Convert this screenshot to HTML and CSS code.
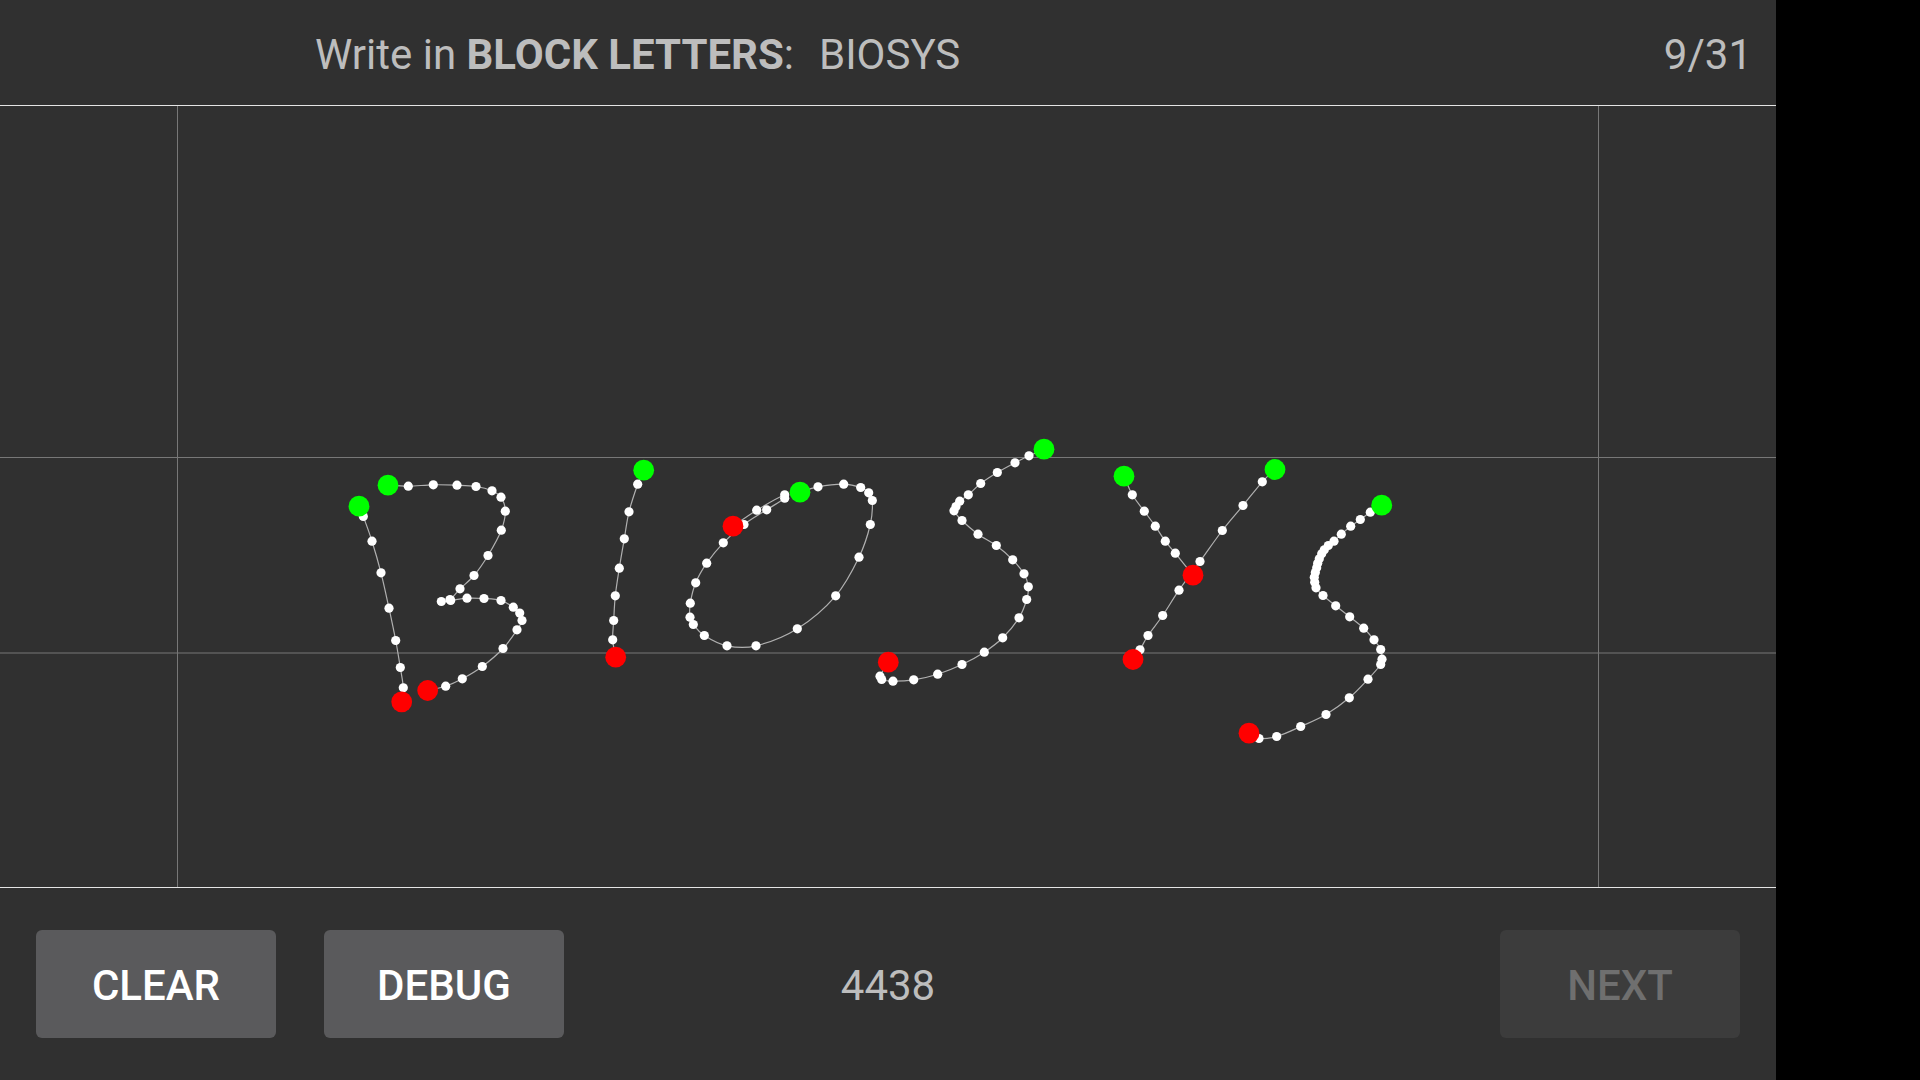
FILE: index.html
```html
<!DOCTYPE html>
<html lang="en">
<head>
<meta charset="utf-8">
<title>Handwriting capture</title>
<link rel="stylesheet" href="styles.css">
</head>
<body>
<main class="app">
  <header class="header">
    <div class="prompt">Write in <b>BLOCK LETTERS</b>:<span class="word">BIOSYS</span></div>
    <div class="count">9/31</div>
  </header>
  <section class="canvas">
    <svg class="ink" viewBox="0 106 1776 781" width="1776" height="781" aria-label="Handwriting trace">
      <line class="guide" x1="177.5" y1="106" x2="177.5" y2="887"></line>
      <line class="guide" x1="1598.5" y1="106" x2="1598.5" y2="887"></line>
      <line class="guide" x1="0" y1="457.5" x2="1776" y2="457.5"></line>
      <line class="guide" x1="0" y1="653" x2="1776" y2="653"></line>
      <g id="ink" transform="translate(0 0.5)"></g>
    </svg>
  </section>
  <footer class="footer">
    <div class="actions">
      <button class="btn">CLEAR</button>
      <button class="btn">DEBUG</button>
    </div>
    <div class="timer">4438</div>
    <div class="end">
      <button class="btn btn-off">NEXT</button>
    </div>
  </footer>
</main>
<script src="app.js"></script>
</body>
</html>
```
FILE: styles.css
```css
* { box-sizing: border-box; }
html, body { margin: 0; height: 100%; background: #000; }
body { font-family: Roboto, "Noto Sans", sans-serif; overflow: hidden; }
.app {
  width: 1776px;
  height: 1080px;
  background: #303030;
  display: flex;
  flex-direction: column;
}
.header {
  height: 106px;
  flex: none;
  border-bottom: 1px solid #e4e4e4;
  display: flex;
  align-items: center;
  justify-content: space-between;
  padding: 4px 24px 0 315px;
  font-size: 42px;
  color: #bdbdbd;
}
.prompt b { font-weight: 700; }
.word { margin-left: 25px; }
.canvas { height: 781px; flex: none; }
.ink { display: block; }
.guide { stroke: #777; stroke-width: 1; }
.trace { fill: none; stroke: #b0b0b0; stroke-width: 1.2; }
.pt { fill: #fff; }
.start { fill: #00ff00; }
.stop { fill: #ff0000; }
.footer {
  flex: 1;
  border-top: 1px solid #e4e4e4;
  display: grid;
  grid-template-columns: 1fr auto 1fr;
  align-items: start;
  padding: 42px 36px 0;
}
.actions { display: flex; gap: 48px; }
.end { display: flex; justify-content: flex-end; }
.btn {
  width: 240px;
  height: 108px;
  border: 0;
  border-radius: 6px;
  background: #5a5a5c;
  color: #fff;
  font: 500 42px Roboto, sans-serif;
  padding: 2px 0 0;
}
.btn-off { background: #3c3c3c; color: #6f6f6f; }
.timer {
  height: 108px;
  padding-top: 2px;
  display: flex;
  align-items: center;
  font-size: 42px;
  color: #bdbdbd;
}
```
FILE: app.js
```js
var strokes = [
  [[359,505.7],[363.3,516],[372,540.7],[381,572.3],[389,607.7],[395.7,640],[400.3,667],[403.3,687.3],[401.7,701.3]],
  [[388,484.7],[408.3,485.7],[433.3,484.3],[457,484.7],[476,486],[492,490.3],[501,496.7],[505.3,510.7],[501.3,529.7],[488,555],[474,575],[460,588.3],[450,599],[441.3,601],[450.7,600],[467,597.7],[484,598],[501,600],[513.3,606.7],[519.7,612.5],[522,620],[517,629.3],[503,648],[482.3,666],[462.3,678.3],[445.7,685.7],[427.7,690]],
  [[643.7,469.7],[637.7,483.7],[629,511.3],[624.3,538.3],[619.3,567.7],[615.3,595.3],[613.7,620],[612.7,639.3],[615.7,656.7]],
  [[800,491.7],[818,486.3],[843.7,483.7],[860.7,487],[868.7,492.3],[872.3,500],[870.3,524],[859,556.7],[835.7,595.3],[797.3,628.3],[756,645.3],[727,645.3],[704.3,635],[693.3,624],[690,616.7],[690.3,602.7],[695.7,582.3],[706.7,562.7],[723.3,542.3],[744,524],[766.7,509.3],[784.7,497.7],[784.7,494.3],[756.7,509.7],[733,525.7]],
  [[1044,448.7],[1029,455.3],[1015,462.3],[997.3,472],[980.7,483],[968.3,494.3],[959.7,500.7],[956,506],[954,510.3],[962,520],[978,533.7],[996.3,545],[1012.7,559.3],[1024,573.3],[1028.3,586.3],[1026.7,599],[1019,617.3],[1002.7,637.3],[984.3,651.7],[962,664],[937.7,673.7],[913.7,679.3],[893,680.7],[881.7,679],[880,675.7],[888.3,661.7]],
  [[1124,475.7],[1132.3,494.3],[1144.3,510.7],[1155.3,525.7],[1165.3,540.7],[1175.3,552.7],[1193,574.7]],
  [[1275,469],[1262.3,481.3],[1243,505],[1222.3,530],[1200,561],[1179,589.7],[1162.7,615],[1148,635],[1140,649.3],[1133,659]],
  [[1381.7,504.7],[1370.3,511.7],[1360.3,519],[1350.7,525.7],[1341.3,533.7],[1334,540.7],[1328.3,545],[1324.3,549.3],[1321.7,553.3],[1319.3,558.3],[1317.7,562.7],[1316.7,567.3],[1315.3,572],[1314.3,576.7],[1314.7,581.7],[1316,587.3],[1323,595],[1335.7,605.3],[1349.7,616.3],[1363.7,627.7],[1374,639.3],[1380.7,649],[1382,658.7],[1380.7,664],[1368,678.7],[1349.3,697.3],[1326,714],[1300.7,726],[1276.7,736],[1259,738],[1249,732.7]]
];
var NS = 'http://www.w3.org/2000/svg';
var ink = document.getElementById('ink');
function add(tag, attrs) {
  var el = document.createElementNS(NS, tag);
  for (var k in attrs) el.setAttribute(k, attrs[k]);
  ink.appendChild(el);
}
function smooth(p) {
  var d = 'M' + p[0][0] + ' ' + p[0][1];
  for (var i = 0; i < p.length - 1; i++) {
    var a = p[Math.max(i - 1, 0)], b = p[i], c = p[i + 1], e = p[Math.min(i + 2, p.length - 1)];
    d += 'C' + (b[0] + (c[0] - a[0]) / 6) + ' ' + (b[1] + (c[1] - a[1]) / 6) + ' ' +
         (c[0] - (e[0] - b[0]) / 6) + ' ' + (c[1] - (e[1] - b[1]) / 6) + ' ' + c[0] + ' ' + c[1];
  }
  return d;
}
strokes.forEach(function (s) { add('path', { 'class': 'trace', d: smooth(s) }); });
strokes.forEach(function (s) {
  s.slice(1, -1).forEach(function (p) { add('circle', { 'class': 'pt', cx: p[0], cy: p[1], r: 4.6 }); });
});
strokes.forEach(function (s) {
  var a = s[0], b = s[s.length - 1];
  add('circle', { 'class': 'start', cx: a[0], cy: a[1], r: 10.4 });
  add('circle', { 'class': 'stop', cx: b[0], cy: b[1], r: 10.4 });
});
```
